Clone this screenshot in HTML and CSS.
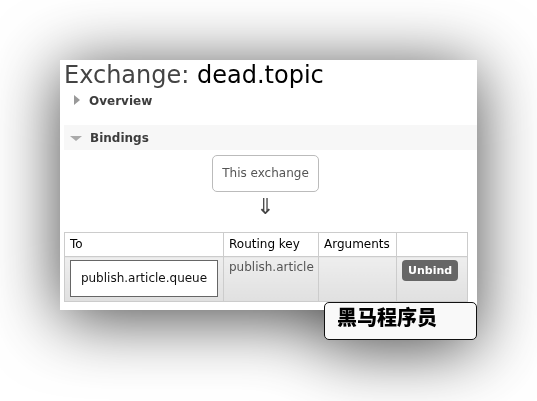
FILE: index.html
```html
<!DOCTYPE html>
<html lang="en">
<head>
<meta charset="utf-8">
<title>Exchange: dead.topic</title>
<link rel="stylesheet" href="styles.css">
</head>
<body>
<div class="stage">
  <div class="card">
    <h1 class="title"><span class="title-label">Exchange:</span> dead.topic</h1>
    <div class="section-head collapsed">
      <span class="tri-right"></span>
      <span class="section-name">Overview</span>
    </div>
    <div class="section-head expanded">
      <span class="tri-down"></span>
      <span class="section-name">Bindings</span>
    </div>
    <div class="bindings">
      <div class="flow">
        <div class="this-exchange">This exchange</div>
        <div class="arrow">&#8659;</div>
      </div>
      <table class="list">
        <colgroup>
          <col class="c-to">
          <col class="c-key">
          <col class="c-args">
          <col class="c-act">
        </colgroup>
        <thead>
          <tr>
            <th>To</th>
            <th>Routing key</th>
            <th>Arguments</th>
            <th></th>
          </tr>
        </thead>
        <tbody>
          <tr class="alt">
            <td><span class="queue-box">publish.article.queue</span></td>
            <td class="key">publish.article</td>
            <td></td>
            <td><button class="unbind" type="button">Unbind</button></td>
          </tr>
        </tbody>
      </table>
    </div>
    <div class="watermark">黑马程序员</div>
  </div>
</div>
</body>
</html>
```

FILE: styles.css
```css
html, body {
  margin: 0;
  padding: 0;
  background: #ffffff;
}

html {
  height: 401px;
  overflow: hidden;
}

body {
  height: 401px;
  font-family: "DejaVu Sans", Verdana, sans-serif;
  color: #000;
}

.stage {
  box-sizing: border-box;
  height: 401px;
  padding: 60px 0 0 60px;
}

.card {
  position: relative;
  box-sizing: border-box;
  width: 417px;
  height: 250px;
  padding: 0 0 0 4px;
  background: #ffffff;
  filter: drop-shadow(0 8px 34px rgba(0, 0, 0, 0.72));
}

.title {
  margin: 0;
  padding-top: 2px;
  font-size: 24px;
  line-height: 26px;
  font-weight: normal;
  color: #000;
  white-space: nowrap;
}

.title-label {
  color: #444;
}

.section-head {
  display: flex;
  align-items: center;
  font-size: 12px;
  font-weight: bold;
  color: #444;
}

.section-head.collapsed {
  height: 16px;
  margin-top: 5px;
  padding-left: 10px;
}

.section-head.expanded {
  height: 25px;
  margin-top: 16px;
  padding-left: 6px;
  background: #f7f7f7;
}

.tri-right {
  width: 0;
  height: 0;
  border-top: 5px solid transparent;
  border-bottom: 5px solid transparent;
  border-left: 6px solid #999;
  margin-right: 9px;
  margin-top: -2px;
}

.tri-down {
  width: 0;
  height: 0;
  border-left: 6px solid transparent;
  border-right: 6px solid transparent;
  border-top: 5px solid #aaa;
  margin-right: 8px;
  margin-top: 2px;
}

.section-name {
  color: #3d3d3d;
}

.bindings {
  width: 403px;
}

.flow {
  display: flex;
  flex-direction: column;
  align-items: center;
  padding-top: 5px;
}

.this-exchange {
  border: 1px solid #bbb;
  border-radius: 5px;
  padding: 10px 9px;
  font-size: 12px;
  line-height: 15px;
  color: #555;
}

.arrow {
  margin-top: 3px;
  margin-bottom: 14px;
  font-size: 22px;
  line-height: 23px;
  color: #444;
}

.list {
  width: 403px;
  border-collapse: collapse;
  table-layout: fixed;
  font-size: 12px;
}

.c-to { width: 159px; }
.c-key { width: 95px; }
.c-args { width: 78px; }
.c-act { width: 71px; }

.list th,
.list td {
  border: 1px solid #ccc;
  text-align: left;
  vertical-align: top;
}

.list th {
  font-weight: normal;
  color: #000;
  padding: 4px 5px;
  line-height: 15px;
  height: 15px;
}

.list td {
  padding: 2px 4px 4px 5px;
  line-height: 15px;
  color: #555;
  white-space: nowrap;
}

.list tr.alt td {
  background: linear-gradient(to bottom, #eeeeee, #e0e0e0);
}

.list td.key {
  padding-top: 3px;
}

.queue-box {
  display: block;
  box-sizing: border-box;
  width: 148px;
  border: 1px solid #666;
  background: #fff;
  padding: 10px 0;
  line-height: 15px;
  text-align: center;
  color: #111;
  margin-top: 1px;
}

.unbind {
  display: block;
  margin-top: 1px;
  border: none;
  border-radius: 4px;
  background: #666;
  color: #fff;
  font-family: "DejaVu Sans", Verdana, sans-serif;
  font-size: 11px;
  font-weight: bold;
  line-height: 21px;
  padding: 0 6px;
}

.watermark {
  position: absolute;
  left: 264px;
  top: 242px;
  box-sizing: border-box;
  width: 153px;
  height: 38px;
  border: 1px solid #111;
  border-radius: 5px;
  background: #f9f9f9;
  padding: 4px 0 0 12px;
  font-family: "Noto Sans CJK SC", "DejaVu Sans", sans-serif;
  font-size: 20px;
  font-weight: 900;
  line-height: 20px;
  color: #000;
}
```
